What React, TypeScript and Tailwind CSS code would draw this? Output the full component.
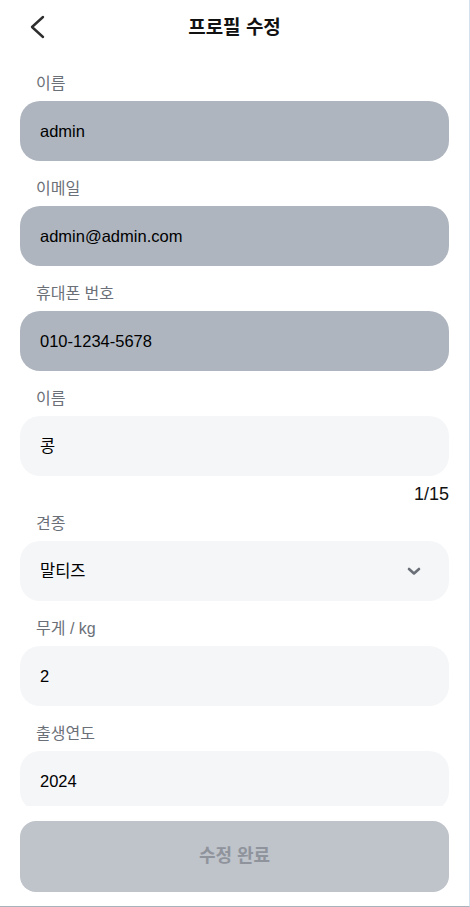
import React from "react";

const font = { fontFamily: '"Liberation Sans", "Noto Sans CJK KR", sans-serif' };

function Label({ children }: { children: React.ReactNode }) {
  return <div className="px-4 text-[16px] leading-5 text-[#6b7078]">{children}</div>;
}

function Field({ label, value, disabled }: { label: string; value: string; disabled?: boolean }) {
  return (
    <div className="flex flex-col gap-[7px]">
      <Label>{label}</Label>
      <div
        className={`h-[60px] rounded-[20px] px-5 flex items-center text-[16.5px] text-black ${
          disabled ? "bg-[#aeb5bf]" : "bg-[#f5f6f8]"
        }`}
      >
        {value}
      </div>
    </div>
  );
}

export default function App() {
  return (
    <div
      style={font}
      className="w-[470px] h-[907px] bg-white flex flex-col border-r border-r-[#d3e1ee] border-b border-b-[#a9b3be] overflow-hidden"
    >
      <div className="h-[56px] shrink-0 relative flex items-center justify-center">
        <svg
          className="absolute left-[28px] top-[14px]"
          width="20"
          height="26"
          viewBox="0 0 20 26"
          fill="none"
          stroke="#2d2d2d"
          strokeWidth="2.4"
          strokeLinecap="round"
          strokeLinejoin="round"
        >
          <polyline points="15,3 4,13 15,23" />
        </svg>
        <div className="text-[19px] font-bold text-[#111]">프로필 수정</div>
      </div>
      <div className="flex-1 overflow-hidden px-5 pt-[18px] flex flex-col">
        <div className="flex flex-col gap-[18px]">
          <Field label="이름" value="admin" disabled />
          <Field label="이메일" value="admin@admin.com" disabled />
          <Field label="휴대폰 번호" value="010-1234-5678" disabled />
          <div className="flex flex-col">
            <Field label="이름" value="콩" />
            <div className="text-right text-[18px] leading-6 text-[#111] mt-[6px]">1/15</div>
          </div>
        </div>
        <div className="flex flex-col gap-[18px] mt-[8px]">
          <div className="flex flex-col gap-[7px]">
            <Label>견종</Label>
            <div className="h-[60px] rounded-[20px] pl-5 pr-[28px] flex items-center justify-between bg-[#f5f6f8] text-[16.5px] text-black">
              <span>말티즈</span>
              <svg width="14" height="9" viewBox="0 0 14 9" fill="none" stroke="#6b7078" strokeWidth="2.6" strokeLinecap="round" strokeLinejoin="round">
                <polyline points="2,2 7,6.5 12,2" />
              </svg>
            </div>
          </div>
          <Field label="무게 / kg" value="2" />
          <Field label="출생연도" value="2024" />
        </div>
      </div>
      <div className="h-[100px] shrink-0 px-5 pt-[15px]">
        <div className="h-[71px] rounded-[16px] bg-[#bfc3ca] flex items-center justify-center text-[18px] font-bold text-[#8f949c]">
          수정 완료
        </div>
      </div>
    </div>
  );
}
